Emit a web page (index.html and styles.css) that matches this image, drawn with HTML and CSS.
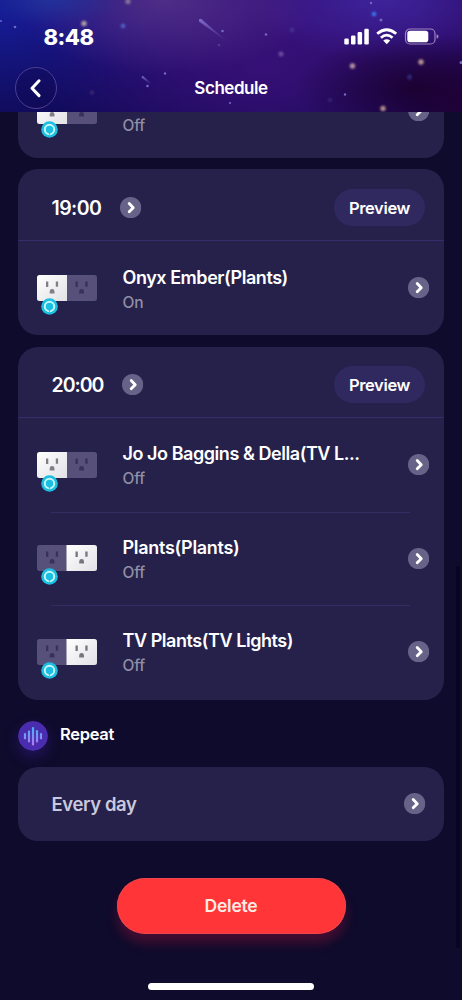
FILE: index.html
```html
<!DOCTYPE html>
<html lang="en">
<head>
<meta charset="utf-8">
<title>Schedule</title>
<link rel="stylesheet" href="styles.css">
</head>
<body>
<svg class="defs" aria-hidden="true">
  <defs>
    <linearGradient id="plate" x1="0" y1="0" x2="1" y2="1"><stop offset="0" stop-color="#ffffff"/><stop offset="1" stop-color="#e2e1e5"/></linearGradient>
    <linearGradient id="wave" gradientUnits="userSpaceOnUse" x1="0" y1="6" x2="0" y2="24"><stop offset="0" stop-color="#42b4f5"/><stop offset="1" stop-color="#b377ee"/></linearGradient>
    <symbol id="chevron" viewBox="0 0 22 22"><circle cx="11" cy="11" r="11" fill="#676288"/><path d="M9.500 6.700 13.700 11 9.500 15.300" fill="none" stroke="#fff" stroke-width="2.900" stroke-linecap="round" stroke-linejoin="round"/></symbol>
    <symbol id="holes" viewBox="0 0 30 26"><path d="M9 6.500h2.300v5.600H9zM18.800 6.500h2.300v5.200h-2.300zM12.700 18.500v-2a2.400 2.400 0 0 1 4.800 0v2z"/></symbol>
    <symbol id="badge" viewBox="0 0 18 18"><circle cx="9" cy="9" r="8.300" fill="#1cbfe0"/><circle cx="9" cy="9" r="4.700" fill="#1abfe2" stroke="#c8f7fb" stroke-width="1.900"/><path d="M8 12.500 9 15l1-2.500z" fill="#1cbfe0"/></symbol>
    <symbol id="outlet-left" viewBox="0 0 60 41">
      <path d="M30 0h27.500A2.500 2.500 0 0 1 60 2.500v21a2.500 2.500 0 0 1-2.500 2.500H30z" fill="#56507b"/>
      <path d="M30 0h-27.500A2.500 2.500 0 0 0 0 2.500v21A2.500 2.500 0 0 0 2.500 26h27.500z" fill="url(#plate)"/>
      <use href="#holes" width="30" height="26" fill="#817f85"/><use href="#holes" x="29.500" width="30" height="26" fill="#37315b"/>
      <use href="#badge" x="3.500" y="22.500" width="18" height="18"/>
    </symbol>
    <symbol id="outlet-right" viewBox="0 0 60 41">
      <path d="M30 0H2.500A2.500 2.500 0 0 0 0 2.500v21A2.500 2.500 0 0 0 2.500 26H30z" fill="#56507b"/>
      <path d="M29.500 0h28A2.500 2.500 0 0 1 60 2.500v21a2.500 2.500 0 0 1-2.500 2.500h-28z" fill="url(#plate)"/>
      <use href="#holes" width="30" height="26" fill="#37315b"/><use href="#holes" x="29.500" width="30" height="26" fill="#77757b"/>
      <use href="#badge" x="3.500" y="22.500" width="18" height="18"/>
    </symbol>
  </defs>
</svg>
<div class="screen">
  <header class="hero">
    <svg class="sky" viewBox="0 0 462 112" aria-hidden="true">
      <defs>
        <filter id="soft" x="-100%" y="-100%" width="300%" height="300%"><feGaussianBlur stdDeviation=".9"/></filter>
        <linearGradient id="trail" x1="0" y1="0" x2="1" y2="1"><stop offset="0" stop-color="#8b78d8" stop-opacity=".85"/><stop offset="1" stop-color="#7058c0" stop-opacity="0"/></linearGradient>
      </defs>
      <path d="M199 19.500Q200 18 202 19.500L229 43 199 21.500z" fill="url(#trail)"/>
      <path d="M142 76.500 151 84" stroke="url(#trail)" stroke-width="2"/>
      <g filter="url(#soft)">
        <circle cx="84" cy="23.500" r="2.700" fill="#b09aa2"/><circle cx="128" cy="1.500" r="2.700" fill="#85729a"/>
        <circle cx="123" cy="26" r="2.300" fill="#5363c8"/><circle cx="92" cy="92.500" r="2.300" fill="#3b2870"/>
        <circle cx="374" cy="14" r="2.200" fill="#3b7df0"/><circle cx="352.500" cy="66" r="2.700" fill="#b391a0"/>
        <circle cx="421" cy="62" r="2.700" fill="#b5948f"/><circle cx="383" cy="108.500" r="2.700" fill="#b08c83"/>
        <circle cx="281" cy="54" r="2.500" fill="#6c4d9c"/><circle cx="409.500" cy="77" r="2.500" fill="#2d2877"/>
        <circle cx="292" cy="30" r="2.300" fill="#4a3292"/><circle cx="330" cy="100" r="2" fill="#392477"/>
      </g>
      <g fill="#7468c0"><circle cx="15" cy="27" r="1.300"/><circle cx="1" cy="21" r="1"/><circle cx="222.500" cy="31" r="1.300"/><circle cx="219" cy="45" r="1.300" opacity=".4"/><circle cx="165" cy="73.500" r="1.200"/><circle cx="147.500" cy="86" r="1.300"/><circle cx="230" cy="103" r="1.100"/><circle cx="266" cy="34.500" r="1.300"/><circle cx="381" cy="20" r="1.500"/><circle cx="371" cy="3" r="1.200"/><circle cx="345" cy="94.500" r="1.200"/><circle cx="461" cy="62.500" r="1.500"/></g>
    </svg>
    <div class="status">
      <span class="clock">8:48</span>
      <svg class="indicators" viewBox="0 0 96 18" aria-hidden="true">
        <g fill="#fff"><rect x="0.300" y="10.500" width="4.500" height="6" rx="1.300"/><rect x="7" y="7.500" width="4.500" height="9" rx="1.300"/><rect x="13.600" y="4" width="4.500" height="12.500" rx="1.300"/><rect x="20.300" y="0.700" width="4.500" height="15.800" rx="1.300"/></g>
        <g fill="none" stroke="#fff" stroke-width="2.800"><path d="M33.200 5.800Q42.700-2.300 52.200 5.800"/><path d="M36.900 9.700Q42.700 4.600 48.500 9.700"/></g>
        <path d="M39.200 12.600Q42.700 9.800 46.200 12.600L42.700 16.200z" fill="#fff"/>
        <rect x="61.500" y="1" width="29.500" height="15" rx="4.500" fill="none" stroke="#9c83bd" stroke-width="1.200"/>
        <rect x="63.300" y="2.800" width="21" height="11.400" rx="2.800" fill="#fff"/><path d="M92.600 6.200Q94.500 6.700 94.500 8.500T92.600 10.800z" fill="#a28bc2"/>
      </svg>
    </div>
    <nav class="navbar">
      <button class="back" aria-label="Back"><svg viewBox="0 0 42 42"><path d="M24.200 13.400 16.800 21.200 24.200 29" fill="none" stroke="#fff" stroke-width="3.200" stroke-linecap="round" stroke-linejoin="round"/></svg></button>
      <h1 class="heading">Schedule</h1>
    </nav>
  </header>

  <main class="content">
    <section class="card card-clipped">
      <div class="row">
        <svg class="device"><use href="#outlet-left"/></svg>
        <div class="label"><div class="name"></div><div class="state">Off</div></div>
        <svg class="go"><use href="#chevron"/></svg>
      </div>
    </section>

    <section class="card">
      <div class="card-head"><span class="time">19:00</span><svg class="go time-go"><use href="#chevron"/></svg><button class="preview">Preview</button></div>
      <div class="row">
        <svg class="device"><use href="#outlet-left"/></svg>
        <div class="label"><div class="name">Onyx Ember(Plants)</div><div class="state">On</div></div>
        <svg class="go"><use href="#chevron"/></svg>
      </div>
    </section>

    <section class="card card-multi">
      <div class="card-head"><span class="time time-wide">20:00</span><svg class="go time-go"><use href="#chevron"/></svg><button class="preview">Preview</button></div>
      <div class="row">
        <svg class="device"><use href="#outlet-left"/></svg>
        <div class="label"><div class="name">Jo Jo Baggins &amp; Della(TV L...</div><div class="state">Off</div></div>
        <svg class="go"><use href="#chevron"/></svg>
      </div>
      <div class="divider"></div>
      <div class="row">
        <svg class="device"><use href="#outlet-right"/></svg>
        <div class="label"><div class="name name-short">Plants(Plants)</div><div class="state">Off</div></div>
        <svg class="go"><use href="#chevron"/></svg>
      </div>
      <div class="divider"></div>
      <div class="row">
        <svg class="device"><use href="#outlet-right"/></svg>
        <div class="label"><div class="name">TV Plants(TV Lights)</div><div class="state">Off</div></div>
        <svg class="go"><use href="#chevron"/></svg>
      </div>
    </section>

    <div class="repeat-head">
      <svg class="repeat-icon" viewBox="0 0 30 30"><circle cx="15" cy="15" r="15" fill="#4a2dae"/><path d="M7 13v4.300M11 10.500v10M15 7v16.500M19 10v10.500M23 13v4.300" stroke="url(#wave)" stroke-width="2.200" stroke-linecap="round"/></svg>
      <h2 class="repeat-title">Repeat</h2>
    </div>
    <section class="card repeat"><span class="repeat-value">Every day</span><svg class="go"><use href="#chevron"/></svg></section>
    <button class="delete">Delete</button>
    <div class="home-indicator"></div>
  </main>
  <div class="scrollbar"></div>
</div>
</body>
</html>
```
FILE: styles.css
```css
* { box-sizing: border-box; }
body { margin: 0; background: #0f0b2c; font-family: Inter, "Liberation Sans", sans-serif; color: #fff; }
button { font: inherit; color: inherit; padding: 0; border: 0; }
svg { display: block; flex: none; }
.defs { position: absolute; width: 0; height: 0; }
.screen { position: relative; width: 462px; height: 1000px; overflow: hidden; display: flex; flex-direction: column; background: #0f0b2c; }

.hero {
  position: relative; flex: none; height: 112px; overflow: hidden;
  background:
    radial-gradient(ellipse 120px 55px at 415px 88px, rgba(27,0,46,.9), rgba(32,0,57,0)),
    radial-gradient(ellipse 70px 55px at 462px 105px, rgba(38,0,56,.8), rgba(38,0,56,0)),
    radial-gradient(ellipse 70px 25px at 50px 0, rgba(34,62,165,.6), rgba(34,62,165,0)),
    radial-gradient(ellipse 150px 75px at 165px 0, rgba(84,50,136,.85), rgba(70,40,130,0)),
    radial-gradient(ellipse 140px 60px at 385px 0, rgba(62,38,160,.85), rgba(62,38,160,0)),
    radial-gradient(ellipse 210px 130px at 260px 70px, rgba(56,16,120,.85), rgba(56,16,120,0)),
    linear-gradient(180deg, rgba(15,8,80,0) 20%, rgba(15,7,75,.75) 100%),
    linear-gradient(90deg, #151b92 0%, #1b1485 20%, #2d127c 40%, #37117c 60%, #34107a 80%, #2f0c6c 100%);
}
.sky { position: absolute; inset: 0; width: 462px; height: 112px; }
.status { position: relative; display: flex; justify-content: space-between; padding: 23px 22px 0 43.500px; height: 67px; }
.clock { font-size: 22px; line-height: 28px; font-weight: 800; letter-spacing: -.5px; }
.indicators { width: 96px; height: 18px; margin-top: 4.500px; }
.navbar { position: relative; display: grid; grid-template-columns: 42px 1fr 42px; align-items: center; padding: 0 15px; height: 42px; }
.back { width: 42px; height: 42px; border: 1px solid #4d3d94; border-radius: 50%; background: rgba(16,6,75,.3); }
.back svg { width: 40px; height: 40px; }
.heading { margin: 0; text-align: center; font-size: 17px; line-height: 24px; font-weight: 600; letter-spacing: -.45px; }

.content { flex: 1; min-height: 0; padding: 0 18px; overflow: hidden; display: flex; flex-direction: column; }
.card { flex: none; background: #25214b; border-radius: 20px; margin-bottom: 12px; width: 426px; }
.card-clipped { height: 46px; margin-bottom: 11px; overflow: hidden; display: flex; flex-direction: column; justify-content: flex-end; border-radius: 0 0 20px 20px; }
.card-head { height: 72px; padding: 6px 19px 0 33.500px; display: flex; align-items: center; border-bottom: 1.500px solid #332d6c; }
.card-multi .card-head { height: 71px; padding-top: 5px; }
.card-multi { padding-bottom: 1px; }
.card-multi .row { height: 93.600px; }
.time { font-size: 19.500px; font-weight: 600; line-height: 26px; letter-spacing: -.55px; }
.time-wide { letter-spacing: -1px; }
.go { width: 21.300px; height: 21.300px; }
.time-go { margin-left: 19px; }
.preview { margin-left: auto; width: 91px; height: 37px; border-radius: 19px; background: #2f295f; font-size: 16.500px; font-weight: 600; letter-spacing: -.35px; }
.row { flex: none; height: 94px; padding: 0 14.700px 0 18.500px; display: flex; align-items: center; }
.row .device { width: 60px; height: 41px; margin-top: 15px; }
.label { margin: 2px 0 0 26px; flex: 1; min-width: 0; }
.name { height: 24px; line-height: 24px; font-size: 18px; font-weight: 600; letter-spacing: -.45px; white-space: nowrap; }
.name-short { letter-spacing: -.3px; }
.state { margin-top: 3px; line-height: 20px; font-size: 15.500px; font-weight: 500; letter-spacing: -.15px; color: #928fa4; }
.divider { height: 1px; margin: 0 34px -1px 33px; background: #332d64; }
.repeat-head { flex: none; display: flex; height: 30px; margin-top: 9px; gap: 12px; }
.repeat-icon { width: 30px; height: 30px; border-radius: 50%; box-shadow: 0 6px 14px rgba(66,36,170,.4); }
.repeat-title { margin: 2px 0 0; font-size: 16.500px; line-height: 22px; font-weight: 600; letter-spacing: -.3px; }
.repeat { height: 74px; margin: 16px 0 0; padding: 0 18.500px 0 33.500px; display: flex; align-items: center; justify-content: space-between; }
.repeat-value { font-size: 18.500px; font-weight: 600; letter-spacing: -.4px; color: #cbc8dd; }
.delete { flex: none; align-self: center; width: 229px; height: 56px; margin-top: 37px; border-radius: 28px; background: #ff3537; color: #ffebe5; font-size: 17.500px; font-weight: 600; letter-spacing: -.2px; box-shadow: inset 0 0 0 1px rgba(225,80,92,.65), 0 9px 11px rgba(180,20,58,.32); }
.home-indicator { flex: none; align-self: center; width: 166px; height: 7px; border-radius: 4px; background: #fff; margin-top: 49.500px; }
.scrollbar { position: absolute; right: 2px; top: 566px; width: 4px; height: 382px; border-radius: 2px; background: #080520; }
```
